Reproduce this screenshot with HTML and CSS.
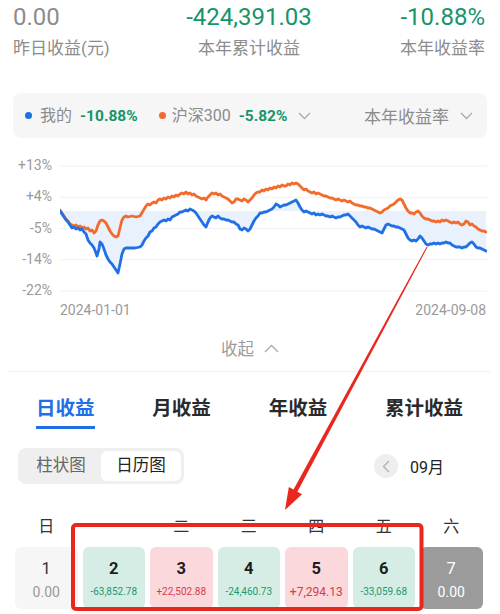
FILE: index.html
```html
<!DOCTYPE html>
<html lang="zh-CN">
<head>
<meta charset="utf-8">
<link rel="stylesheet" href="styles.css">
</head>
<body>
<div class="page">
  <div class="stats">
    <div class="stat left">
      <div class="value gray">0.00</div>
      <div class="label">昨日收益(元)</div>
    </div>
    <div class="stat center">
      <div class="value green">-424,391.03</div>
      <div class="label">本年累计收益</div>
    </div>
    <div class="stat right">
      <div class="value green">-10.88%</div>
      <div class="label">本年收益率</div>
    </div>
  </div>

  <div class="legend">
    <span class="dot blue"></span>
    <span class="lg-name">我的</span>
    <span class="lg-val">-10.88%</span>
    <span class="dot orange"></span>
    <span class="lg-name">沪深300</span>
    <span class="lg-val">-5.82%</span>
    <svg class="chev" width="13" height="8" viewBox="0 0 13 8"><polyline points="1,1 6.5,6.5 12,1" fill="none" stroke="#aaa" stroke-width="1.3"/></svg>
    <span class="lg-spacer"></span>
    <span class="lg-type">本年收益率</span>
    <svg class="chev chev-r" width="13" height="8" viewBox="0 0 13 8"><polyline points="1,1 6.5,6.5 12,1" fill="none" stroke="#aaa" stroke-width="1.3"/></svg>
  </div>

  <div class="chart">
    <div class="yaxis">
      <div>+13%</div>
      <div>+4%</div>
      <div>-5%</div>
      <div>-14%</div>
      <div>-22%</div>
    </div>
    <svg class="plot" width="427" height="150" viewBox="60 150 427 150">
      <g stroke="#f1f1f1" stroke-width="1">
        <line x1="60" y1="166" x2="487" y2="166"/>
        <line x1="60" y1="197.25" x2="487" y2="197.25"/>
        <line x1="60" y1="228.5" x2="487" y2="228.5"/>
        <line x1="60" y1="259.75" x2="487" y2="259.75"/>
        <line x1="60" y1="291" x2="487" y2="291"/>
      </g>
      <polygon fill="#e9f1fd" points="60,211 62,214 64,217 66,220 68,222 70,225 72,228 74,227 76,229 78,228 80,230 82,229 84,232 86,234 88,240 90,243 92,245 94,248 96,253 97,256 99,249 100,242 102,244 104,249 106,255 108,259 110,262 112,264 114,267 116,270 118,273 120,264 122,254 124,249 126,248 130,248 135,248 140,247 142,245 144,241 146,238 148,236 150,232 152,231 154,228 156,227 158,224 160,222 162,221 164,220 166,221 168,219 170,220 172,217 174,216 176,215 178,214 180,212 182,212 184,211 186,210 188,211 190,209 192,210 194,211 196,213 198,216 200,219 202,222 204,225 206,227 208,222 210,218 212,216 214,217 216,218 218,216 220,218 222,219 224,219 226,220 228,220 230,221 232,222 234,222 236,224 238,225 240,229 242,230 244,228 246,229 248,231 250,229 252,225 254,221 256,218 258,216 260,213 262,213 264,212 266,212 268,211 270,210 272,209 274,207 276,204 278,205 280,207 282,206 284,205 286,205 288,204 290,203 292,202 294,201 296,200 298,203 300,207 302,210 304,212 306,211 308,212 310,213 312,214 314,213 316,215 318,214 320,215 322,214 324,215 326,216 328,216 330,217 332,216 334,217 336,218 338,217 340,217 342,216 344,215 346,215 348,214 350,216 352,218 354,220 356,222 358,225 360,227 362,226 364,227 366,228 368,227 370,228 372,229 374,229 376,230 378,231 380,232 382,233 384,229 386,225 388,224 390,225 392,226 394,226 396,227 398,227 400,228 402,229 404,230 406,234 408,238 410,240 412,241 414,240 416,241 418,239 420,236 422,238 424,241 426,244 428,245 430,244 432,244 434,243 436,244 438,243 440,244 442,243 444,243 446,242 448,243 450,243 452,245 454,246 456,247 458,247 460,247 462,248 464,247 466,247 468,245 470,243 472,242 474,244 476,247 478,248 480,248 482,249 484,250 486,251 486,211"/>
      <polyline fill="none" stroke="#f26a2c" stroke-width="2.8" stroke-linejoin="round" stroke-linecap="round" points="60,210 62,213 64,216 66,219 68,221 70,224 72,225 74,226 76,225 78,227 80,226 82,228 84,227 86,229 88,228 90,231 92,230 94,233 96,231 98,225 100,221 102,220 104,221 106,223 108,227 110,231 112,234 114,236 116,237 118,236 120,228 122,220 124,217 126,216 128,217 132,216 136,217 140,216 143,211 146,206 148,204 150,205 152,203 154,202 156,203 158,200 160,199 162,200 164,198 166,199 168,197 170,198 172,196 174,197 176,195 178,196 180,194 182,193 184,194 186,192 188,194 190,193 192,195 194,194 196,196 198,197 200,198 202,199 204,198 206,200 208,197 210,195 212,193 214,194 216,193 218,195 220,194 222,196 224,197 226,198 228,199 230,201 232,203 234,202 236,199 238,199 240,200 242,201 244,199 246,200 248,202 250,200 252,198 254,195 256,193 258,192 260,192 262,190 264,191 266,189 268,190 270,188 272,189 274,187 276,188 278,186 280,187 282,185 284,186 286,186 288,184 290,185 292,183 294,184 296,183 298,184 300,186 302,188 304,190 306,189 308,191 310,192 312,193 314,192 316,194 318,193 320,194 322,195 324,196 326,196 328,197 330,198 332,198 334,199 336,200 338,199 340,200 342,201 344,200 346,201 348,202 350,201 352,203 354,204 356,205 358,205 360,206 362,206 364,207 366,207 368,208 370,208 372,209 374,210 376,211 378,212 380,213 382,212 384,210 386,209 388,208 390,206 392,205 394,204 396,202 398,200 400,199 402,200 404,204 406,208 408,211 410,213 412,213 414,214 416,212 418,211 420,213 422,216 424,218 426,219 428,219 430,220 432,221 434,221 436,222 438,221 440,222 442,220 444,221 446,220 448,221 450,222 452,223 454,222 456,223 458,222 460,224 462,225 464,224 466,221 468,222 470,225 472,224 474,226 476,227 478,229 480,230 482,231 484,231 486,232"/>
      <polyline fill="none" stroke="#1f6fe6" stroke-width="2.8" stroke-linejoin="round" stroke-linecap="round" points="60,211 62,214 64,217 66,220 68,222 70,225 72,228 74,227 76,229 78,228 80,230 82,229 84,232 86,234 88,240 90,243 92,245 94,248 96,253 97,256 99,249 100,242 102,244 104,249 106,255 108,259 110,262 112,264 114,267 116,270 118,273 120,264 122,254 124,249 126,248 130,248 135,248 140,247 142,245 144,241 146,238 148,236 150,232 152,231 154,228 156,227 158,224 160,222 162,221 164,220 166,221 168,219 170,220 172,217 174,216 176,215 178,214 180,212 182,212 184,211 186,210 188,211 190,209 192,210 194,211 196,213 198,216 200,219 202,222 204,225 206,227 208,222 210,218 212,216 214,217 216,218 218,216 220,218 222,219 224,219 226,220 228,220 230,221 232,222 234,222 236,224 238,225 240,229 242,230 244,228 246,229 248,231 250,229 252,225 254,221 256,218 258,216 260,213 262,213 264,212 266,212 268,211 270,210 272,209 274,207 276,204 278,205 280,207 282,206 284,205 286,205 288,204 290,203 292,202 294,201 296,200 298,203 300,207 302,210 304,212 306,211 308,212 310,213 312,214 314,213 316,215 318,214 320,215 322,214 324,215 326,216 328,216 330,217 332,216 334,217 336,218 338,217 340,217 342,216 344,215 346,215 348,214 350,216 352,218 354,220 356,222 358,225 360,227 362,226 364,227 366,228 368,227 370,228 372,229 374,229 376,230 378,231 380,232 382,233 384,229 386,225 388,224 390,225 392,226 394,226 396,227 398,227 400,228 402,229 404,230 406,234 408,238 410,240 412,241 414,240 416,241 418,239 420,236 422,238 424,241 426,244 428,245 430,244 432,244 434,243 436,244 438,243 440,244 442,243 444,243 446,242 448,243 450,243 452,245 454,246 456,247 458,247 460,247 462,248 464,247 466,247 468,245 470,243 472,242 474,244 476,247 478,248 480,248 482,249 484,250 486,251"/>
    </svg>
  </div>
  <div class="dates">
    <span>2024-01-01</span>
    <span>2024-09-08</span>
  </div>

  <div class="collapse">
    <span>收起</span>
    <svg width="15" height="9" viewBox="0 0 15 9"><polyline points="1,8 7.5,1.5 14,8" fill="none" stroke="#aaa" stroke-width="1.3"/></svg>
  </div>
  <div class="divider"></div>

  <div class="tabs">
    <div class="tab active">日收益</div>
    <div class="tab">月收益</div>
    <div class="tab">年收益</div>
    <div class="tab">累计收益</div>
  </div>

  <div class="toolbar">
    <div class="segment">
      <div class="seg">柱状图</div>
      <div class="seg on">日历图</div>
    </div>
    <div class="month">
      <span class="prev"><svg width="8" height="13" viewBox="0 0 8 13"><polyline points="7,1 1.5,6.5 7,12" fill="none" stroke="#b0b0b0" stroke-width="1.3"/></svg></span>
      <span class="mtext">09月</span>
    </div>
  </div>

  <div class="weekdays">
    <div>日</div><div>一</div><div>二</div><div>三</div><div>四</div><div>五</div><div>六</div>
  </div>

  <div class="cells">
    <div class="cell plain"><div class="num">1</div><div class="amt">0.00</div></div>
    <div class="cell down"><div class="num">2</div><div class="amt">-63,852.78</div></div>
    <div class="cell up"><div class="num">3</div><div class="amt">+22,502.88</div></div>
    <div class="cell down"><div class="num">4</div><div class="amt">-24,460.73</div></div>
    <div class="cell up"><div class="num">5</div><div class="amt big">+7,294.13</div></div>
    <div class="cell down"><div class="num">6</div><div class="amt">-33,059.68</div></div>
    <div class="cell off"><div class="num">7</div><div class="amt">0.00</div></div>
  </div>

  <svg class="annot" width="500" height="614" viewBox="0 0 500 614">
    <rect x="73" y="525" width="348.5" height="84" rx="3" fill="none" stroke="#e8281f" stroke-width="4"/>
    <polygon fill="#e8281f" points="427.44,247.24 426.56,246.76 292.56,491.35 296.44,493.45"/>
    <polygon fill="#e8281f" points="285,510 288.85,487.08 302.05,494.2"/>
  </svg>
</div>
</body>
</html>
```

FILE: styles.css
```css
* { box-sizing: border-box; }
html, body { margin: 0; padding: 0; background: #fff; }
body {
  width: 500px;
  height: 614px;
  overflow: hidden;
  font-family: Roboto, "Noto Sans CJK SC", sans-serif;
  color: #222;
}
.page { position: relative; width: 500px; height: 614px; }

.stats {
  display: grid;
  grid-template-columns: 1fr 1fr 1fr;
  padding: 3px 15px 0 13px;
}
.stat.center { text-align: center; }
.stat.right { text-align: right; }
.value { font-size: 24px; line-height: 28px; }
.gray { color: #8c8c8c; }
.green { color: #16946a; }
.label { margin-top: 5px; font-size: 17px; line-height: 24px; color: #8c8c8c; }

.legend {
  margin: 33px 13px 0 13px;
  height: 45px;
  background: #f6f6f6;
  border-radius: 8px;
  display: flex;
  align-items: center;
  padding: 0 14px 0 12px;
  font-size: 16px;
  color: #8c8c8c;
}
.dot { width: 7px; height: 7px; border-radius: 50%; display: inline-block; }
.dot.blue { background: #1f6fe6; margin-right: 8px; }
.dot.orange { background: #f26a2c; margin-left: 21px; margin-right: 6px; }
.lg-name { line-height: 20px; }
.lg-val { margin-left: 8px; font-size: 15.5px; font-weight: 700; color: #16946a; }
.chev { margin-left: 11px; }
.lg-spacer { flex: 1; }
.lg-type { font-size: 17px; }

.chart { display: flex; height: 150px; margin-top: 12px; }
.yaxis { width: 52px; }
.yaxis div {
  height: 31.25px;
  line-height: 31.25px;
  text-align: right;
  font-size: 14px;
  color: #9a9a9a;
}
.plot { margin-left: 8px; display: block; }
.dates {
  display: flex;
  justify-content: space-between;
  margin: 0 14px 0 60px;
  font-size: 14px;
  line-height: 20px;
  color: #9a9a9a;
}

.collapse {
  margin-top: 16px;
  height: 24px;
  display: flex;
  align-items: center;
  justify-content: center;
  gap: 10px;
  font-size: 16.5px;
  color: #9a9a9a;
}
.divider { margin: 11px 10px 0 8px; height: 1px; background: #f1f1f1; }

.tabs {
  display: flex;
  justify-content: space-between;
  margin-top: 23px;
  padding: 0 37px 0 36px;
}
.tab {
  font-size: 19.5px;
  line-height: 28px;
  font-weight: 600;
  color: #2a2a2a;
  padding-bottom: 3px;
  border-bottom: 3px solid transparent;
}
.tab.active { color: #1f6fe6; border-bottom-color: #1f6fe6; }

.toolbar {
  margin-top: 19px;
  padding: 0 56px 0 18px;
  display: flex;
  justify-content: space-between;
  align-items: center;
}
.segment {
  display: flex;
  background: #efefef;
  border-radius: 8px;
  padding: 3px;
}
.seg {
  width: 80px;
  height: 30px;
  line-height: 30px;
  text-align: center;
  font-size: 16.5px;
  color: #666;
  border-radius: 6px;
}
.seg.on { background: #fff; color: #222; }
.month { display: flex; align-items: center; gap: 12px; }
.prev {
  width: 24px;
  height: 24px;
  border-radius: 50%;
  background: #eeeeee;
  display: flex;
  align-items: center;
  justify-content: center;
}
.mtext { font-size: 16px; color: #222; }

.weekdays {
  margin-top: 31px;
  display: grid;
  grid-template-columns: repeat(7, 1fr);
  column-gap: 5px;
  padding: 0 17.5px 0 15px;
  text-align: center;
  font-size: 16px;
  line-height: 24px;
  color: #333;
}

.cells {
  margin-top: 8px;
  display: grid;
  grid-template-columns: repeat(7, 1fr);
  column-gap: 5px;
  padding: 0 17.5px 0 15px;
}
.cell {
  height: 62px;
  border-radius: 6px;
  display: flex;
  flex-direction: column;
  align-items: center;
  padding-top: 12px;
}
.num { font-size: 16.5px; line-height: 20px; font-weight: 700; color: #1e1e1e; }
.amt { margin-top: 5px; font-size: 10px; line-height: 16px; }
.amt.big { font-size: 12px; }
.cell.down { background: #d5ede4; }
.cell.down .amt { color: #1f9870; }
.cell.up { background: #fbd8db; }
.cell.up .amt { color: #d63c4b; }
.cell.plain { background: #f6f6f6; }
.cell.plain .num { font-weight: 400; color: #333; }
.cell.plain .amt { font-size: 14px; color: #999; }
.cell.off { background: #9b9b9b; }
.cell.off .num { font-weight: 400; color: #fff; }
.cell.off .amt { font-size: 14px; color: #fff; }

.annot { position: absolute; left: 0; top: 0; pointer-events: none; }
```
